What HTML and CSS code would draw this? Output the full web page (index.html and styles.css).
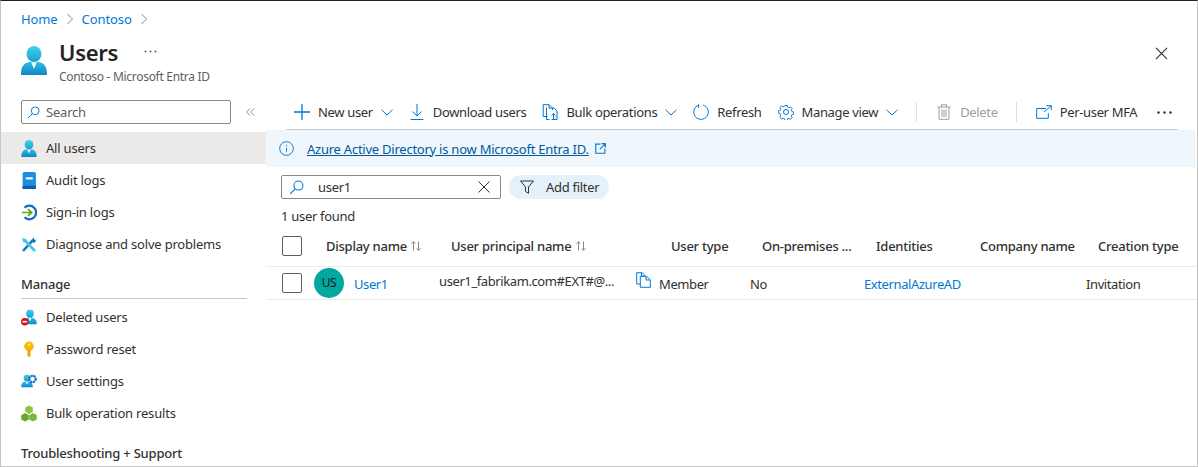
FILE: index.html
```html
<!DOCTYPE html>
<html lang="en">
<head>
  <meta charset="UTF-8">
  <title>Users - Microsoft Entra ID</title>
  <link rel="stylesheet" href="styles.css">
</head>
<body>
  <svg class="defs" width="0" height="0">
    <defs>
      <linearGradient id="skin" x1="0" y1="0" x2="0" y2="1">
        <stop offset="0" stop-color="#3fd4f0"/>
        <stop offset="1" stop-color="#1a9fd0"/>
      </linearGradient>
      <linearGradient id="torso" x1="0" y1="0" x2="0" y2="1">
        <stop offset="0" stop-color="#2cc0e4"/>
        <stop offset="1" stop-color="#0f86c4"/>
      </linearGradient>
      <symbol id="person" viewBox="0 0 26 29">
        <ellipse cx="13" cy="8" rx="7.4" ry="8" fill="url(#skin)"/>
        <path d="M0 29c0-3 .2-6 1.500-8.500C3.200 17.500 6.500 16 9.500 15.800c2 1.500 5 1.500 7 0 3 .2 6.300 1.700 8 4.700C25.800 23 26 26 26 29z" fill="url(#torso)"/>
        <path d="M10.300 16.500h5.400L13 23z" fill="#fff"/>
      </symbol>
    </defs>
  </svg>

  <div class="portal">
    <nav class="crumbs">
      <a href="#">Home</a>
      <svg class="crumb-sep" viewBox="0 0 8 12"><path d="M1.500 1l5 5-5 5"/></svg>
      <a href="#">Contoso</a>
      <svg class="crumb-sep" viewBox="0 0 8 12"><path d="M1.500 1l5 5-5 5"/></svg>
    </nav>

    <header class="blade-head">
      <svg class="blade-icon"><use href="#person"/></svg>
      <div class="blade-titles">
        <div class="title-line">
          <h1>Users</h1>
          <svg class="title-more" viewBox="0 0 13 3"><circle cx="1.500" cy="1.500" r="1"/><circle cx="6.500" cy="1.500" r="1"/><circle cx="11.500" cy="1.500" r="1"/></svg>
        </div>
        <p>Contoso - Microsoft Entra ID</p>
      </div>
      <svg class="close-x" viewBox="0 0 14 14"><path d="M1 1l12 12M13 1L1 13"/></svg>
    </header>

    <div class="blade-body">
      <aside class="sidebar">
        <div class="side-search-row">
          <div class="side-search">
            <svg class="glass" viewBox="0 0 14 14"><circle cx="8.800" cy="5.200" r="4.200"/><path d="M5.800 8.200L1 13"/></svg>
            <span>Search</span>
          </div>
          <span class="collapse">
            <svg viewBox="0 0 10 10"><path d="M4.500 1L.8 5l3.700 4M9 1L5.300 5 9 9"/></svg>
          </span>
        </div>

        <a class="nav-item active" href="#">
          <svg class="nav-icon"><use href="#person"/></svg>All users
        </a>
        <a class="nav-item" href="#">
          <svg class="nav-icon" viewBox="0 0 14 16"><rect x="1" y="0" width="12.500" height="16" rx="1.500" fill="#1b8fdc"/><rect x="1" y="13" width="12.500" height="3" fill="#0c5ea8"/><rect x="4" y="5" width="6.500" height="2" fill="#fff"/></svg>Audit logs
        </a>
        <a class="nav-item" href="#">
          <svg class="nav-icon" viewBox="0 0 16 16"><path d="M3.500 3.200A6.800 6.800 0 1 1 3.500 12.800" fill="none" stroke="#0f6fc0" stroke-width="2.300"/><path d="M1 8h9.500M7 4.600L10.700 8 7 11.400" fill="none" stroke="#5fa60a" stroke-width="1.700"/></svg>Sign-in logs
        </a>
        <a class="nav-item" href="#">
          <svg class="nav-icon" viewBox="0 0 16 16"><path d="M2 14.500L12 3.500" stroke="#0f78c4" stroke-width="2.600"/><path d="M14 14.500L3 3" stroke="#42c3ea" stroke-width="2.600"/><path d="M9.500 5l3-4 1 2.500 2-.500-2 3.500z" fill="#0f78c4"/><path d="M1 1.500l4 1 .5 3-3 .5z" fill="#42c3ea"/></svg>Diagnose and solve problems
        </a>

        <h2 class="nav-heading">Manage</h2>

        <a class="nav-item" href="#">
          <svg class="nav-icon" viewBox="0 0 16 16"><use href="#person" x="2" y="0" width="14" height="15"/><circle cx="3.700" cy="12.200" r="3.700" fill="#e00b1c"/><rect x="1.500" y="11.400" width="4.400" height="1.600" fill="#fff"/></svg>Deleted users
        </a>
        <a class="nav-item" href="#">
          <svg class="nav-icon" viewBox="0 0 16 16"><circle cx="8" cy="4.800" r="4.800" fill="#ffb900"/><path d="M6.500 8h3v6l-1.500 2-1.500-2z" fill="#f2a100"/><circle cx="8" cy="3.200" r="1" fill="#fff3c4"/></svg>Password reset
        </a>
        <a class="nav-item" href="#">
          <svg class="nav-icon" viewBox="0 0 16 16"><use href="#person" x="0" y="1" width="12" height="13"/><circle cx="11.500" cy="5.500" r="3.200" fill="none" stroke="#0f6fc0" stroke-width="2.200" stroke-dasharray="2 .6"/></svg>User settings
        </a>
        <a class="nav-item" href="#">
          <svg class="nav-icon" viewBox="0 0 16 16"><path d="M8 0l3.800 2.100v4.200L8 8.400 4.200 6.300V2.100z" fill="#8cc63f"/><path d="M4 7.600l3.800 2.100v4.200L4 16 .2 13.900V9.700z" fill="#6aa82a"/><path d="M12 7.600l3.800 2.100v4.200L12 16l-3.800-2.100V9.700z" fill="#7ab732"/></svg>Bulk operation results
        </a>

        <h2 class="nav-heading plain">Troubleshooting + Support</h2>
      </aside>

      <main class="content">
        <div class="toolbar">
          <button class="tool">
            <svg class="ico" viewBox="0 0 16 16"><path d="M8 0v16M0 8h16" stroke-width="1.300"/></svg>New user
            <svg class="chev" viewBox="0 0 12 7"><path d="M.5.800L6 6 11.500.800"/></svg>
          </button>
          <button class="tool">
            <svg class="ico" viewBox="0 0 14 16"><path d="M7 0v11.500M2.500 7.500L7 12l4.500-4.500M.5 15.500h13"/></svg>Download users
          </button>
          <button class="tool">
            <svg class="ico" viewBox="0 0 15 16"><path d="M5 12.500H.7V.7h6l3.300 3.300V6M6.500.7v3.500H10M4 3.500v12h3M10 4h1.500l3 3v8.500H9"/><path d="M11 15V9.500M9 11.500l2-2 2 2"/></svg>Bulk operations
            <svg class="chev" viewBox="0 0 12 7"><path d="M.5.800L6 6 11.500.800"/></svg>
          </button>
          <button class="tool">
            <svg class="ico" viewBox="0 0 16 16"><path d="M5.500 1.200A7.300 7.300 0 1 0 10 1" /><path d="M5.700 .2l-.2 3.800" /></svg>Refresh
          </button>
          <button class="tool before-sep">
            <svg class="ico" viewBox="0 0 16 16"><circle cx="8" cy="8" r="2.500"/><path d="M6.700.7h2.600l.4 2 1.500.7 1.800-1 1.800 1.800-1 1.800.7 1.500 2 .4v2.600l-2 .4-.7 1.500 1 1.800-1.800 1.800-1.800-1-1.500.7-.4 2H6.700l-.4-2-1.500-.7-1.800 1L1.200 13l1-1.800-.7-1.500-2-.4V6.700l2-.4.7-1.500-1-1.800L3 1.200l1.800 1 1.500-.7z" transform="translate(.8 .8) scale(.9)"/></svg>Manage view
            <svg class="chev" viewBox="0 0 12 7"><path d="M.5.800L6 6 11.500.800"/></svg>
          </button>
          <span class="tool-sep"></span>
          <button class="tool disabled before-sep">
            <svg class="ico" viewBox="0 0 13 16"><path d="M0 3h13M4 3V.7h5V3M1.500 3v12.300h10V3M4.500 5.500v7.500M6.500 5.500v7.500M8.500 5.500v7.500"/></svg>Delete
          </button>
          <span class="tool-sep"></span>
          <button class="tool">
            <svg class="ico" viewBox="0 0 16 14"><path d="M10 3.500H.7v9.800h11.600V8"/><path d="M8 7l7-6M10.500.7h4.800v4.500"/></svg>Per-user MFA
          </button>
          <svg class="tool-more" viewBox="0 0 15 3"><circle cx="1.500" cy="1.500" r="1.200"/><circle cx="7.500" cy="1.500" r="1.200"/><circle cx="13.500" cy="1.500" r="1.200"/></svg>
        </div>

        <div class="banner">
          <svg class="info" viewBox="0 0 16 16"><circle cx="8" cy="8" r="7.300"/><path d="M8 7v4.500M8 4.200v1.300"/></svg>
          <a href="#">Azure Active Directory is now Microsoft Entra ID.</a>
          <svg class="ext" viewBox="0 0 10 10"><path d="M5 1H.7v8.300H9V5M4.500 5.500L9.300.7M6 .6h3.400V4"/></svg>
        </div>

        <div class="filters">
          <div class="filter-search">
            <svg class="glass" viewBox="0 0 14 14"><circle cx="8.800" cy="5.200" r="4.200"/><path d="M5.800 8.200L1 13"/></svg>
            <span class="filter-text">user1</span>
            <svg class="clear-x" viewBox="0 0 12 12"><path d="M.5.500l11 11M11.500.500l-11 11"/></svg>
          </div>
          <button class="pill">
            <svg viewBox="0 0 14 14"><path d="M.5 1h13L8.500 7v6.300l-3-1.800V7z"/></svg>Add filter
          </button>
        </div>

        <p class="count">1 user found</p>

        <table class="users">
          <colgroup>
            <col class="c-check"><col class="c-name"><col class="c-upn"><col class="c-type">
            <col class="c-prem"><col class="c-ident"><col class="c-comp"><col>
          </colgroup>
          <thead>
            <tr>
              <th class="check"><span class="box"></span></th>
              <th>Display name <svg class="sort" viewBox="0 0 10 10"><path d="M2.500 9.500V.700M.5 2.700l2-2 2 2M7.500.500v8.800M5.500 7.300l2 2 2-2"/></svg></th>
              <th>User principal name <svg class="sort" viewBox="0 0 10 10"><path d="M2.500 9.500V.700M.5 2.700l2-2 2 2M7.500.500v8.800M5.500 7.300l2 2 2-2"/></svg></th>
              <th>User type</th>
              <th>On-premises ...</th>
              <th>Identities</th>
              <th>Company name</th>
              <th>Creation type</th>
            </tr>
          </thead>
          <tbody>
            <tr>
              <td class="check"><span class="box"></span></td>
              <td class="flush">
                <div class="who">
                  <span class="avatar">US</span>
                  <a class="who-link" href="#">User1</a>
                </div>
              </td>
              <td class="flush">
                <div class="upn">
                  <span class="upn-text">user1_fabrikam.com#EXT#@...</span>
                  <svg class="copy" viewBox="0 0 15 16"><path d="M4 12H.7V.7h5.500L9 3.500M5.500.7v3.500H9M4.300 4.200h6.200l3.800 3.800v7.300H4.300zM10 4.500V8h4"/></svg>
                </div>
              </td>
              <td>Member</td>
              <td>No</td>
              <td><a href="#">ExternalAzureAD</a></td>
              <td></td>
              <td>Invitation</td>
            </tr>
          </tbody>
        </table>
      </main>
    </div>
  </div>
</body>
</html>
```

FILE: styles.css
```css
* {
  box-sizing: border-box;
}
html, body {
  margin: 0;
  height: 467px;
  overflow: hidden;
}
body {
  font-family: "Noto Sans", sans-serif;
  font-size: 13px;
  letter-spacing: -0.3px;
  color: #323130;
  background: #fff;
}
a {
  color: #0078d4;
  text-decoration: none;
}
.defs {
  position: absolute;
}
.portal {
  height: 467px;
  overflow: hidden;
  border-top: 1px solid #222;
  border-left: 1px solid #c8c6c4;
  border-right: 1px solid #c8c6c4;
  border-bottom: 1px solid #c8c6c4;
}

/* breadcrumb and title */
.crumbs {
  display: flex;
  align-items: center;
  gap: 8px;
  height: 18px;
  margin: 9px 0 0 20px;
  letter-spacing: -0.1px;
}
.crumb-sep {
  width: 8px;
  height: 12px;
  fill: none;
  stroke: #8a8886;
}
.blade-head {
  display: flex;
  height: 69px;
  padding: 8px 29px 0 20px;
}
.blade-icon {
  width: 26px;
  height: 29px;
  margin-top: 10px;
}
.blade-titles {
  margin-left: 12px;
  flex: 1;
}
.title-line {
  display: flex;
  height: 32px;
  align-items: center;
}
h1 {
  margin: 0;
  font-size: 22px;
  font-weight: 600;
  color: #252423;
}
.title-more {
  width: 13px;
  height: 3px;
  margin-left: 26px;
  margin-top: -2px;
  fill: #605e5c;
}
.blade-titles p {
  margin: 0;
  font-size: 12px;
  color: #605e5c;
}
.close-x {
  width: 13px;
  height: 13px;
  margin-top: 11px;
  fill: none;
  stroke: #323130;
  stroke-width: 1.2;
}

.blade-body {
  display: flex;
}

/* left menu */
.sidebar {
  width: 265px;
  flex: none;
  letter-spacing: -0.2px;
}
.side-search-row {
  display: flex;
  align-items: center;
  height: 24px;
  margin: 3px 0 8px 20px;
}
.side-search {
  display: flex;
  align-items: center;
  gap: 6px;
  width: 210px;
  height: 24px;
  padding-left: 5px;
  border: 1px solid #8a8886;
  border-radius: 2px;
  color: #605e5c;
}
.glass {
  width: 13px;
  height: 13px;
  fill: none;
  stroke: #0078d4;
  stroke-width: 1;
}
.collapse {
  display: flex;
  margin-left: 15px;
}
.collapse svg {
  width: 9px;
  height: 10px;
  fill: none;
  stroke: #8a8886;
}
.nav-item {
  display: flex;
  align-items: center;
  height: 32px;
  padding-left: 20px;
  color: #323130;
}
.nav-item.active {
  background: #edebe9;
}
.nav-icon {
  width: 16px;
  height: 17px;
  margin-right: 9px;
  flex: none;
}
.nav-heading {
  margin: 0 19px 2px 20px;
  height: 39px;
  padding-top: 15px;
  font-size: 13px;
  font-weight: 500;
  border-bottom: 1px solid #c8c6c4;
}
.nav-heading.plain {
  border: 0;
  margin-top: 0;
}

/* main column */
.content {
  flex: 1;
  min-width: 0;
}
.toolbar {
  display: flex;
  align-items: center;
  height: 33px;
  margin: 0 19px 0 20px;
  padding: 0 0 2px 8px;
  border-bottom: 1px solid #c8ccd6;
  letter-spacing: -0.34px;
}
.tool {
  display: flex;
  align-items: center;
  flex: none;
  padding: 0;
  margin-right: 16px;
  border: 0;
  background: none;
  font: inherit;
  letter-spacing: inherit;
  white-space: nowrap;
  color: #323130;
}
.tool.before-sep {
  margin-right: 18px;
}
.ico {
  width: 16px;
  height: 16px;
  margin-right: 8px;
  fill: none;
  stroke: #0078d4;
  stroke-width: 1;
}
.chev {
  width: 12px;
  height: 7px;
  margin-left: 8px;
  fill: none;
  stroke: #0078d4;
  stroke-width: 1;
}
.tool-sep {
  width: 1px;
  height: 20px;
  margin-right: 19px;
  background: #e1dfdd;
}
.tool.disabled {
  color: #a19f9d;
}
.tool.disabled .ico {
  stroke: #a19f9d;
}
.tool-more {
  width: 15px;
  height: 3px;
  margin-left: 4px;
  fill: #323130;
}
.banner {
  display: flex;
  align-items: center;
  height: 37px;
  margin-right: 2px;
  padding-left: 13px;
  background: #eff6fc;
  letter-spacing: -0.24px;
}
.info {
  width: 15px;
  height: 15px;
  margin-right: 13px;
  fill: none;
  stroke: #0078d4;
}
.banner a {
  color: #005a9e;
  text-decoration: underline;
}
.ext {
  width: 11px;
  height: 11px;
  margin-left: 6px;
  fill: none;
  stroke: #0078d4;
}
.filters {
  display: flex;
  gap: 8px;
  margin: 8px 0 0 15px;
}
.filter-search {
  display: flex;
  align-items: center;
  width: 220px;
  height: 24px;
  padding: 0 10px 0 7px;
  border: 1px solid #8a8886;
  border-radius: 2px;
}
.filter-search .glass {
  width: 15px;
  height: 15px;
}
.filter-text {
  flex: 1;
  margin-left: 14px;
}
.clear-x {
  width: 12px;
  height: 12px;
  fill: none;
  stroke: #323130;
}
.pill {
  display: flex;
  align-items: center;
  width: 100px;
  height: 24px;
  padding: 0 0 0 11px;
  border: 0;
  border-radius: 12px;
  background: #e5f1fa;
  font: inherit;
  letter-spacing: inherit;
  color: #323130;
}
.pill svg {
  width: 14px;
  height: 14px;
  margin-right: 12px;
  fill: none;
  stroke: #323130;
}
.count {
  margin: 8px 0 0 15px;
  height: 18px;
  line-height: 18px;
}

/* users grid */
.users {
  width: 931px;
  margin-top: 2px;
  border-collapse: collapse;
  table-layout: fixed;
}
.c-check { width: 48px; }
.c-name { width: 125px; }
.c-upn { width: 220px; }
.c-type { width: 91px; }
.c-prem { width: 114px; }
.c-ident { width: 104px; }
.c-comp { width: 118px; }
.users th {
  height: 39px;
  padding: 0 0 0 12px;
  text-align: left;
  font-weight: 500;
  letter-spacing: -0.25px;
  white-space: nowrap;
  border-bottom: 1px solid #edebe9;
}
.users td {
  height: 33px;
  padding: 2px 0 0;
  letter-spacing: -0.4px;
  white-space: nowrap;
  border-bottom: 1px solid #edebe9;
}
.users td.flush {
  padding: 0;
}
.users th.check,
.users td.check {
  padding: 0 0 0 16px;
}
.box {
  display: block;
  width: 20px;
  height: 20px;
  border: 1px solid #605e5c;
  border-radius: 2px;
}
.sort {
  width: 10px;
  height: 10px;
  margin-left: 1px;
  fill: none;
  stroke: #8a8886;
}
.who {
  display: flex;
  align-items: center;
  gap: 10px;
}
.who-link {
  margin-top: 2px;
}
.avatar {
  display: flex;
  align-items: center;
  justify-content: center;
  width: 30px;
  height: 30px;
  border-radius: 50%;
  background: #00a8a0;
  font-size: 12px;
  color: #1b1a19;
}
.upn {
  display: flex;
  width: 220px;
  height: 32px;
}
.upn-text {
  width: 197px;
  padding-top: 3px;
  line-height: 22px;
}
.copy {
  width: 15px;
  height: 16px;
  margin-top: 5px;
  fill: none;
  stroke: #0078d4;
}
```
